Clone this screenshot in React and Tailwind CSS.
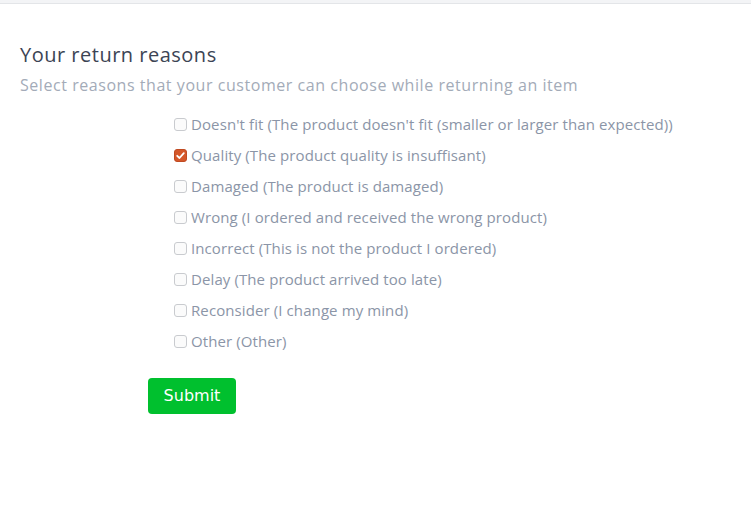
const reasons = [
  { label: "Doesn't fit (The product doesn't fit (smaller or larger than expected))", checked: false },
  { label: 'Quality (The product quality is insuffisant)', checked: true },
  { label: 'Damaged (The product is damaged)', checked: false },
  { label: 'Wrong (I ordered and received the wrong product)', checked: false },
  { label: 'Incorrect (This is not the product I ordered)', checked: false },
  { label: 'Delay (The product arrived too late)', checked: false },
  { label: 'Reconsider (I change my mind)', checked: false },
  { label: 'Other (Other)', checked: false },
]

export default function App() {
  return (
    <div className="min-h-[520px] bg-white font-['Open_Sans',sans-serif]">
      <div className="h-1 bg-[#f3f4f6] border-b border-[#e3e5e8]" />

      <div className="px-5 pt-[37px]">
        <h1 className="text-[20px] leading-7 tracking-[0.5px] text-[#3c4454]">Your return reasons</h1>
        <p className="mt-[4px] text-[16px] leading-6 tracking-[0.55px] text-[#a3abb8]">
          Select reasons that your customer can choose while returning an item
        </p>
      </div>

      <form className="pl-[148px] mt-[12px]">
        <div className="pl-[26px] flex flex-col">
          {reasons.map((r) => (
            <label key={r.label} className="relative flex items-center h-[31px] text-[15px] tracking-[0.1px] text-[#8b95a7]">
              <input
                type="checkbox"
                defaultChecked={r.checked}
                className="peer appearance-none w-[13px] h-[13px] m-0 mr-[4px] rounded-[3px] border border-[#c9cbcf] bg-[#fbfbfb] checked:bg-[#d4572a] checked:border-[#c04a22]"
              />
              <svg
                viewBox="0 0 13 13"
                className="pointer-events-none absolute left-0 top-[9px] w-[13px] h-[13px] hidden peer-checked:block"
              >
                <path d="M3.2 6.8 L5.5 9 L9.8 4.2" fill="none" stroke="white" strokeWidth="1.8" strokeLinecap="round" strokeLinejoin="round" />
              </svg>
              {r.label}
            </label>
          ))}
        </div>

        <button
          type="button"
          className="mt-[21px] w-[88px] h-[36px] rounded bg-[#00c02e] text-white text-[16px] font-['DejaVu_Sans',sans-serif]"
        >
          Submit
        </button>
      </form>
    </div>
  )
}
